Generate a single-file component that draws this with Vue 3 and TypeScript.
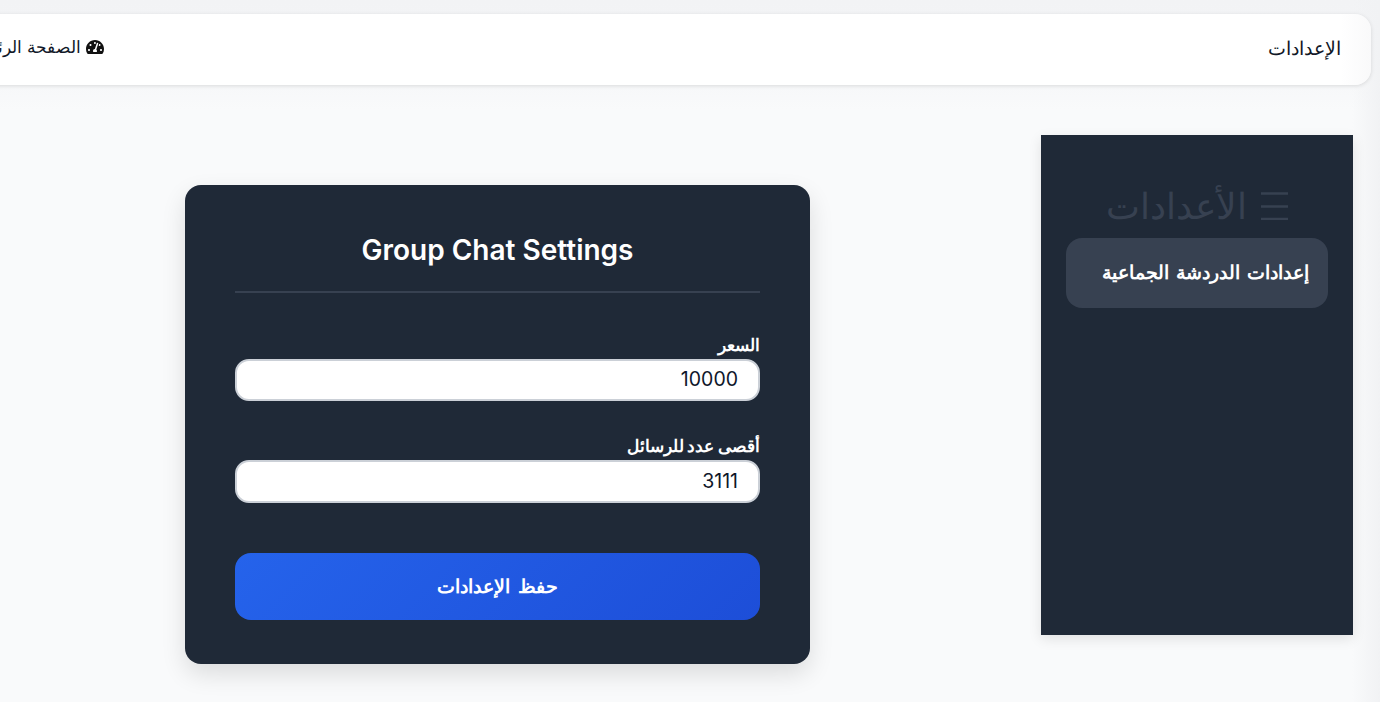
<script setup lang="ts">
const fields = [
  { label: 'السعر', value: '10000' },
  { label: 'أقصى عدد للرسائل', value: '3111' },
]
</script>

<template>
  <div class="viewport">
    <div class="page" dir="rtl">
      <header class="topbar">
        <span class="crumb-title">الإعدادات</span>
        <a class="home-link">
          <svg class="gauge" viewBox="0 0 576 512" aria-hidden="true">
            <path fill="currentColor" d="M288 32C128.94 32 0 160.94 0 320c0 52.8 14.25 102.26 39.06 144.8 5.61 9.62 16.3 15.2 27.44 15.2h443c11.14 0 21.83-5.58 27.44-15.2C561.75 422.26 576 372.8 576 320c0-159.06-128.94-288-288-288zm0 64c14.71 0 26.58 10.13 30.32 23.65-1.11 2.26-2.64 4.23-3.45 6.67l-9.22 27.67c-5.13 3.49-10.97 6.01-17.64 6.01-17.67 0-32-14.33-32-32S270.33 96 288 96zM96 384c-17.67 0-32-14.33-32-32s14.33-32 32-32 32 14.33 32 32-14.33 32-32 32zm48-160c-17.67 0-32-14.33-32-32s14.33-32 32-32 32 14.33 32 32-14.33 32-32 32zm246.77-72.41l-61.33 184C343.13 347.33 352 364.54 352 384c0 11.72-3.38 22.55-8.88 32H232.88c-5.5-9.45-8.88-20.28-8.88-32 0-33.94 26.5-61.43 59.9-63.59l61.34-184.01c4.17-12.56 17.73-19.45 30.36-15.17 12.57 4.19 19.35 17.77 15.17 30.36zm14.66 57.2l15.52-46.55c3.47-1.29 7.13-2.23 11.05-2.23 17.67 0 32 14.33 32 32s-14.33 32-32 32c-11.38-.01-20.89-6.28-26.57-15.22zM480 384c-17.67 0-32-14.33-32-32s14.33-32 32-32 32 14.33 32 32-14.33 32-32 32z"/>
          </svg>
          <span>الصفحة الرئيسية</span>
        </a>
      </header>

      <div class="body-row">
        <aside class="sidebar">
          <h2 class="side-title">
            <svg class="menu-icon" viewBox="0 0 27 28" aria-hidden="true">
              <path d="M0 1.5h27M0 14.5h27M0 27h27" stroke="currentColor" stroke-width="2.5" fill="none" />
            </svg>
            <span>الأعدادات</span>
          </h2>
          <a class="side-item">إعدادات الدردشة الجماعية</a>
        </aside>

        <main class="main">
          <section class="card">
            <h1 class="card-title" dir="ltr">Group Chat Settings</h1>
            <form class="form" @submit.prevent>
              <div v-for="f in fields" :key="f.label" class="field">
                <label class="label">{{ f.label }}</label>
                <input class="input" type="text" :value="f.value" />
              </div>
              <button class="save" type="submit">حفظ الإعدادات</button>
            </form>
          </section>
        </main>
      </div>
    </div>
  </div>
</template>

<style>
html, body { margin: 0; overflow: hidden; }
</style>

<style scoped>
.viewport {
  width: 1380px;
  height: 702px;
  overflow: hidden;
  background:
    linear-gradient(to left, #f1f2f4, rgba(241, 242, 244, 0) 28px),
    linear-gradient(to bottom, #f2f3f5 0, #f3f4f6 40px, #f9fafb 110px);
  font-family: Inter, "Noto Sans", sans-serif;
}
.page {
  width: 1426px;
  margin-left: -46px;
  box-sizing: border-box;
  padding: 14px 9px 0 0;
}
.topbar {
  height: 71px;
  box-sizing: border-box;
  display: flex;
  align-items: center;
  justify-content: space-between;
  padding: 0 30px 3px 10px;
  background: linear-gradient(to left, #f9f9fa, #fff 30px);
  border-radius: 16px;
  box-shadow: 0 1px 4px rgba(0, 0, 0, 0.12);
}
.crumb-title { font-size: 19px; font-weight: 500; color: #111827; }
.home-link { display: flex; align-items: center; gap: 5px; font-size: 17px; color: #111827; position: relative; top: -1px; }
.gauge { width: 18px; height: 16px; color: #111; }
.body-row {
  display: flex;
  align-items: flex-start;
  margin-top: 50px;
  padding-right: 18px;
}
.sidebar {
  width: 312px;
  height: 500px;
  flex: none;
  box-sizing: border-box;
  padding: 42px 25px 0;
  background: #1f2937;
  box-shadow: 0 4px 12px rgba(0, 0, 0, 0.1);
}
.side-title {
  margin: 0 0 4px;
  height: 57px;
  display: flex;
  align-items: center;
  justify-content: center;
  gap: 14px;
  font-size: 36px;
  font-weight: 400;
  color: #374151;
}
.menu-icon { width: 27px; height: 28px; flex: none; }
.side-item {
  display: block;
  height: 70px;
  line-height: 69px;
  padding: 0 19px;
  border-radius: 16px;
  background: #374151;
  color: #fff;
  font-size: 19.2px;
  word-spacing: 2px;
  font-weight: 600;
}
.main { flex: 1; display: flex; justify-content: center; padding-top: 50px; }
.card {
  width: 625px;
  height: 479px;
  box-sizing: border-box;
  padding: 44px 50px 0;
  background: #1f2937;
  border-radius: 16px;
  box-shadow: 0 10px 25px rgba(0, 0, 0, 0.12);
}
.card-title {
  margin: 0;
  padding-bottom: 20px;
  border-bottom: 2px solid #374151;
  text-align: center;
  font-size: 28px;
  line-height: 42px;
  font-weight: 600;
  color: #fff;
}
.form { display: flex; flex-direction: column; }
.field { display: flex; flex-direction: column; margin-top: 40px; }
.field + .field { margin-top: 33px; }
.label {
  margin-bottom: 2px;
  font-size: 16.5px;
  word-spacing: -0.5px;
  line-height: 24px;
  font-weight: 600;
  color: #fff;
}
.input {
  height: 42.4px;
  box-sizing: border-box;
  padding: 0 20px 2px;
  border: 2px solid #cbd0d7;
  border-radius: 14px;
  background: #fff;
  color: #0f172a;
  font-family: inherit;
  font-size: 19.5px;
  outline: none;
}
.save {
  margin-top: 50.2px;
  height: 67px;
  border: none;
  border-radius: 16px;
  padding-bottom: 2px;
  background: linear-gradient(135deg, #2563eb, #1d4ed8);
  color: #fff;
  font-family: inherit;
  font-size: 19.2px;
  word-spacing: 3px;
  font-weight: 600;
}
</style>
